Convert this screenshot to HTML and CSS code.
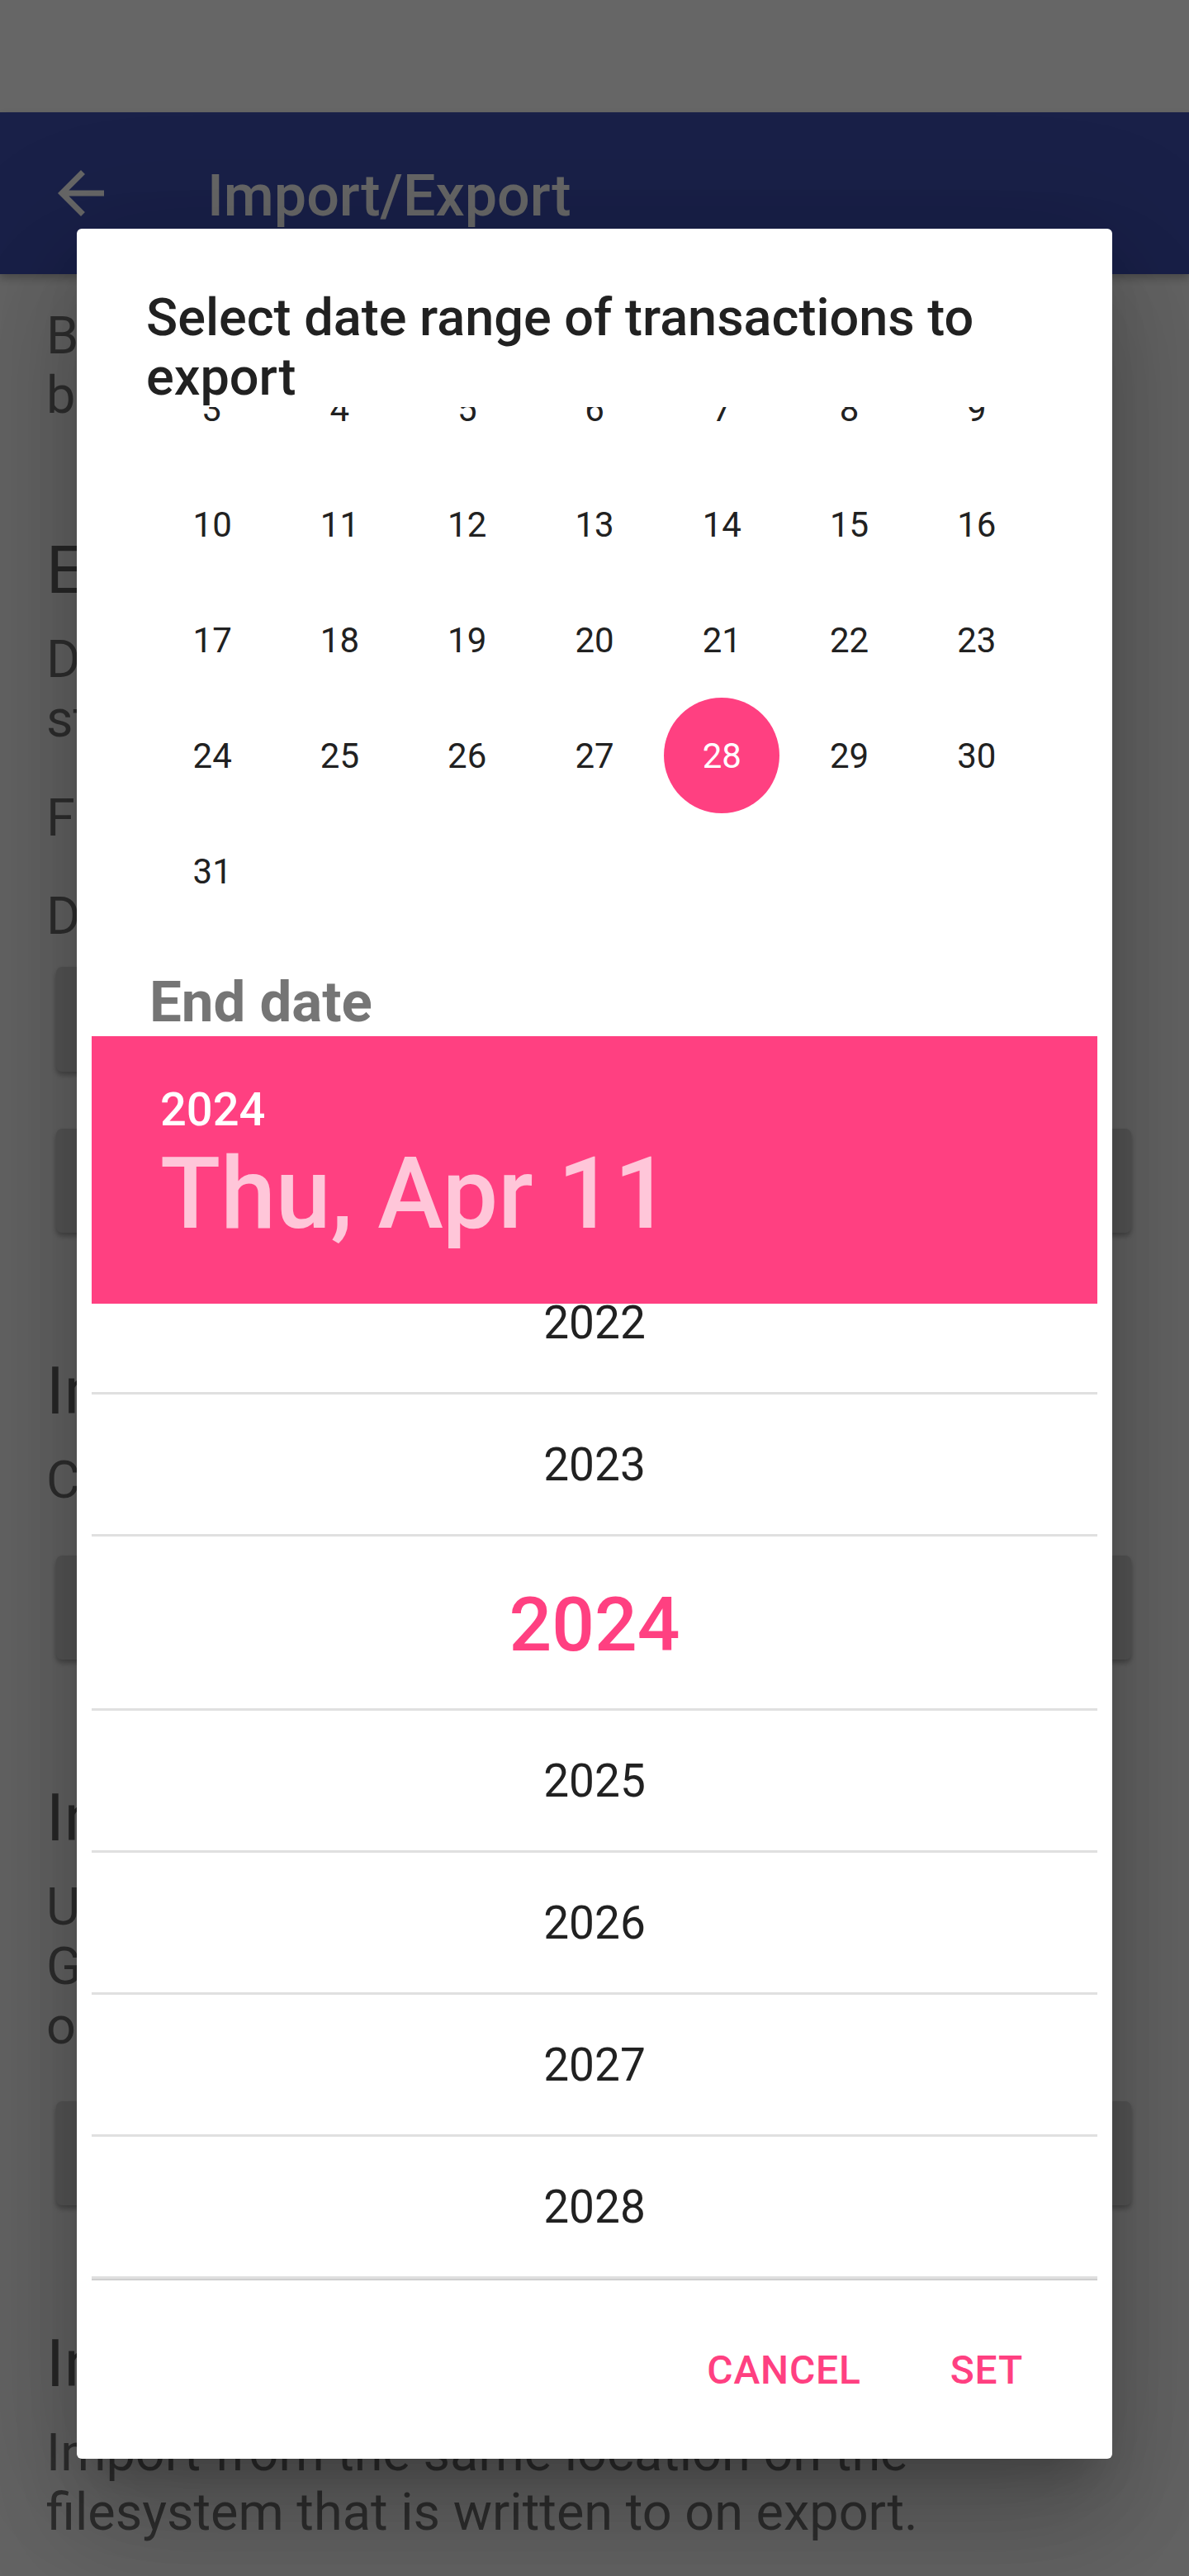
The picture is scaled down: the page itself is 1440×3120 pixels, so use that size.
FILE: index.html
```html
<!DOCTYPE html>
<html lang="en">
<head>
<meta charset="utf-8">
<title>Import/Export</title>
<link rel="stylesheet" href="styles.css">
</head>
<body>
<div class="screen">
  <div class="statusbar"></div>
  <header class="appbar">
    <svg class="back" viewBox="0 0 24 24"><path d="M20 11H7.83l5.59-5.59L12 4l-8 8 8 8 1.41-1.41L7.83 13H20v-2z"/></svg>
    <h1 class="appbar-title">Import/Export</h1>
  </header>
  <main class="content">
    <p class="para p1">Backups allow you to move your budgets and<br>budget transactions to another device.</p>
    <h2 class="heading h-export">Export</h2>
    <p class="para after-h">Data will be exported to a file in the<br>storage of the device.</p>
    <p class="para p3">File format: CSV</p>
    <p class="para p4">Date range</p>
    <div class="bg-btn btn-range">SELECT DATES</div>
    <div class="bg-btn btn-export">EXPORT</div>
    <h2 class="heading">Import from filesystem</h2>
    <p class="para after-h">Choose a file from the filesystem to import.</p>
    <div class="bg-btn">IMPORT FROM FILESYSTEM</div>
    <h2 class="heading">Import using application</h2>
    <p class="para after-h">Use an Android app, such as a file manager or<br>Google Drive, to locate a backup file and<br>open it.</p>
    <div class="bg-btn">IMPORT USING APPLICATION</div>
    <h2 class="heading">Import from default location</h2>
    <p class="para after-h">Import from the same location on the<br>filesystem that is written to on export.</p>
  </main>
  <div class="scrim"></div>
  <div class="dialog">
    <h2 class="dlg-title">Select date range of transactions to export</h2>
    <div class="dlg-scroll">
      <div class="cal">
        <span class="day">3</span><span class="day">4</span><span class="day">5</span><span class="day">6</span><span class="day">7</span><span class="day">8</span><span class="day">9</span>
        <span class="day">10</span><span class="day">11</span><span class="day">12</span><span class="day">13</span><span class="day">14</span><span class="day">15</span><span class="day">16</span>
        <span class="day">17</span><span class="day">18</span><span class="day">19</span><span class="day">20</span><span class="day">21</span><span class="day">22</span><span class="day">23</span>
        <span class="day">24</span><span class="day">25</span><span class="day">26</span><span class="day">27</span><span class="day sel"><span class="dot">28</span></span><span class="day">29</span><span class="day">30</span>
        <span class="day">31</span>
      </div>
      <h3 class="end-label">End date</h3>
      <div class="picker">
        <div class="picker-head">
          <div class="ph-year">2024</div>
          <div class="ph-date">Thu, Apr 11</div>
        </div>
        <div class="years">
          <ul class="year-list">
            <li class="year">2022</li>
            <li class="year">2023</li>
            <li class="year cur">2024</li>
            <li class="year">2025</li>
            <li class="year">2026</li>
            <li class="year">2027</li>
            <li class="year">2028</li>
          </ul>
        </div>
      </div>
    </div>
    <div class="dlg-actions">
      <button class="act">CANCEL</button>
      <button class="act">SET</button>
    </div>
  </div>
</div>
</body>
</html>
```

FILE: styles.css
```css
* { box-sizing: border-box; }
html, body { margin: 0; padding: 0; }
body {
  font-family: Roboto, "Noto Sans", "Liberation Sans", sans-serif;
  background: #fafafa;
}
.screen {
  position: relative;
  width: 1440px;
  height: 3120px;
  overflow: hidden;
  background: #fafafa;
}
.statusbar { height: 136px; background: #ffffff; }
.appbar {
  position: relative;
  z-index: 1;
  height: 196px;
  background: #3f51b5;
  display: flex;
  align-items: center;
  padding-left: 56px;
  box-shadow: 0 5px 10px rgba(0,0,0,.25);
}
.back { width: 84px; height: 84px; fill: #ffffff; flex: none; }
.appbar-title {
  margin: 0 0 0 111px;
  padding-top: 6px;
  font-size: 70px;
  font-weight: 500;
  line-height: 70px;
  color: #ffffff;
}
.content { padding: 0 56px; color: rgba(0,0,0,.54); }
.para { margin: 0; font-size: 63px; line-height: 72px; white-space: nowrap; }
.heading {
  margin: 145px 0 0;
  font-size: 80px;
  line-height: 94px;
  font-weight: 400;
  color: rgba(0,0,0,.6);
  white-space: nowrap;
}
.p1 { margin-top: 39px; }
.h-export { margin-top: 129px; }
.after-h { margin-top: 25px; }
.p3 { margin-top: 48px; }
.p4 { margin-top: 47px; }
.bg-btn {
  margin: 55px 14px 0 12px;
  height: 126px;
  background: #d6d7d7;
  border-radius: 7px;
  box-shadow: 0 4px 6px rgba(0,0,0,.3);
  display: flex;
  align-items: center;
  justify-content: center;
  font-size: 49px;
  font-weight: 500;
  color: rgba(0,0,0,.87);
}
.btn-range { margin-top: 25px; width: 560px; height: 127px; }
.btn-export { margin-top: 69px; }

.scrim { position: absolute; inset: 0; background: rgba(0,0,0,.6); z-index: 2; }

.dialog {
  position: absolute;
  z-index: 3;
  left: 93px;
  top: 277px;
  width: 1254px;
  height: 2701px;
  background: #ffffff;
  border-radius: 6px;
  display: flex;
  flex-direction: column;
  overflow: hidden;
  box-shadow: 0 84px 133px 10px rgba(0,0,0,.14), 0 32px 161px 28px rgba(0,0,0,.12), 0 38px 52px -24px rgba(0,0,0,.2);
}
.dlg-title {
  flex: none;
  margin: 0;
  padding: 72px 80px 0 84px;
  font-size: 63px;
  font-weight: 500;
  line-height: 72px;
  color: #212121;
}
.dlg-scroll { flex: 1; overflow: hidden; }
.cal {
  width: 1080px;
  margin: -68px auto 0;
  display: grid;
  grid-template-columns: repeat(7, 1fr);
  grid-auto-rows: 140px;
}
.day {
  display: flex;
  align-items: center;
  justify-content: center;
  font-size: 42px;
  color: #212121;
}
.dot {
  width: 140px;
  height: 140px;
  border-radius: 50%;
  background: #ff4081;
  color: #ffffff;
  display: flex;
  align-items: center;
  justify-content: center;
}
.end-label {
  margin: 50px 0 2px;
  padding-left: 88px;
  font-size: 69px;
  font-weight: 700;
  line-height: 78px;
  color: #757575;
}
.picker { margin: 0 18px; }
.picker-head {
  height: 324px;
  background: #ff4081;
  padding: 56px 0 0 83px;
}
.ph-year { font-size: 56px; font-weight: 500; line-height: 66px; color: #ffffff; }
.ph-date { font-size: 120px; font-weight: 500; line-height: 138px; color: rgba(255,255,255,.7); white-space: nowrap; }
.years {
  height: 1183px;
  overflow: hidden;
  box-shadow: inset 0 -2px 0 #cfcfcf;
}
.year-list { list-style: none; margin: -62px 0 0; padding: 0; }
.year {
  height: 172px;
  border-bottom: 3px solid #e0e0e0;
  display: flex;
  align-items: center;
  justify-content: center;
  font-size: 55px;
  color: #212121;
}
.year.cur { height: 211px; padding-top: 6px; font-size: 91px; font-weight: 500; color: #ff4081; }
.dlg-actions {
  flex: none;
  height: 216px;
  display: flex;
  justify-content: flex-end;
  align-items: center;
  padding-right: 54px;
}
.act {
  border: 0;
  background: none;
  padding: 0 54px;
  font-family: inherit;
  font-size: 48px;
  font-weight: 500;
  letter-spacing: 0.8px;
  color: #ff4081;
}
```
